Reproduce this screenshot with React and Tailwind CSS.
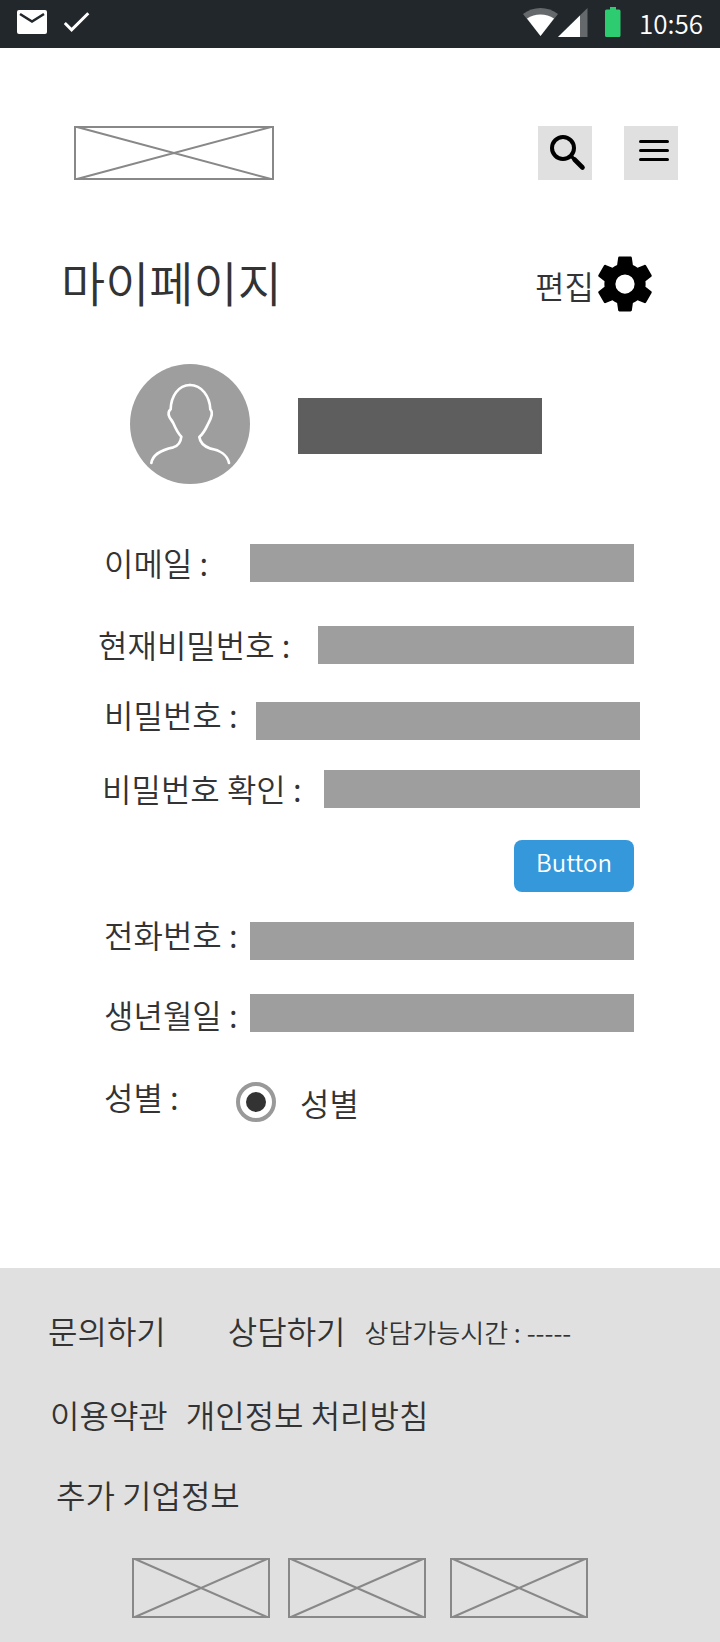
import React from "react";

function ImageBox({ width, height, label }) {
  return (
    <svg width={width} height={height} viewBox={`0 0 ${width} ${height}`} role="img" aria-label={label} fill="none" stroke="#888" strokeWidth="2" className="shrink-0">
      <rect x="1" y="1" width={width - 2} height={height - 2} />
      <path d={`M3 1L${width - 3} ${height - 1}M${width - 3} 1L3 ${height - 1}`} />
    </svg>
  );
}

function StatusBar() {
  return (
    <div className="flex h-12 items-center justify-between bg-[#22272b] px-4 text-white">
      <div className="flex items-center gap-4">
        <svg width="32" height="28" viewBox="0 0 32 28" aria-hidden="true">
          <rect x="1" y="0" width="30" height="24" rx="2" fill="#fff" />
          <path d="M4 4L16 11.500L28 4" fill="none" stroke="#22272b" strokeWidth="2.600" />
        </svg>
        <svg width="26" height="24" viewBox="0 0 26 24" fill="none" stroke="#fff" strokeWidth="3" aria-hidden="true">
          <path d="M0.800 11L7.600 17.800L24.300 1.200" />
        </svg>
      </div>
      <div className="flex items-center pr-px pb-0.5">
        <svg width="100" height="32" viewBox="0 0 100 32" aria-hidden="true">
          <path d="M2 7C12 -1 27 -1 37 7L19.500 29Z" fill="#65696b" />
          <path d="M6 11.600C14 6 25 6 33 11.600L19.500 29Z" fill="#fff" />
          <path d="M66.500 1V30H37Z" fill="#65696b" />
          <path d="M59 8.400V30H37Z" fill="#fff" />
          <path d="M89 0h6v2.500h3a1.500 1.500 0 0 1 1.500 1.500v24.500a1.500 1.500 0 0 1-1.500 1.500H85.500a1.500 1.500 0 0 1-1.500-1.500v-24.500A1.500 1.500 0 0 1 85.500 2.500H89z" fill="#2ecc71" />
        </svg>
        <span className="ml-[18px] text-[26px] leading-8">10:56</span>
      </div>
    </div>
  );
}

function Field({ id, label, type = "text", row, labelWidth, labelLeading = "leading-9" }) {
  return (
    <div className={`flex items-start ${row}`}>
      <label htmlFor={id} className={`shrink-0 whitespace-nowrap ${labelWidth} ${labelLeading}`}>{label}</label>
      <input id={id} type={type} className="h-[38px] min-w-0 flex-1 bg-[#9e9e9e] px-3 text-2xl text-white outline-none" />
    </div>
  );
}

export default function App() {
  return (
    <div className="flex min-h-screen flex-col bg-white font-['Noto_Sans_CJK_KR',sans-serif] text-[32px] font-[350] text-[#333]">
      <StatusBar />

      <header className="mt-[78px] flex items-center pr-[42px] pl-[74px]">
        <a href="#home"><ImageBox width={200} height={54} label="로고" /></a>
        <button type="button" aria-label="검색" className="ml-auto size-[54px] bg-[#e0e0e0]">
          <svg width="54" height="54" viewBox="0 0 54 54" fill="none" stroke="#000" aria-hidden="true">
            <circle cx="25" cy="22" r="11" strokeWidth="4" />
            <path d="M36.500 33.500L44.500 41.500" strokeWidth="4.600" strokeLinecap="round" />
            <path d="M32.500 29.500L37 34" strokeWidth="3.400" />
          </svg>
        </button>
        <button type="button" aria-label="메뉴" className="ml-8 size-[54px] bg-[#e0e0e0]">
          <svg width="54" height="54" viewBox="0 0 54 54" stroke="#000" strokeWidth="3" strokeLinecap="round" aria-hidden="true">
            <path d="M16.500 15.500H43.500M16.500 24.500H43.500M16.500 33.500H43.500" />
          </svg>
        </button>
      </header>

      <main className="mb-[146px]">
        <div className="mt-[70px] flex items-center justify-between pr-[66px] pl-[61px]">
          <h1 className="pb-2 text-5xl leading-[60px]">마이페이지</h1>
          <button type="button" className="flex h-[70px] items-center">
            <span>편집</span>
            <svg width="66" height="66" viewBox="0 0 24 24" fill="#000" className="-mr-1 -ml-0.5 mb-0.5 shrink-0" aria-hidden="true">
              <path d="M19.43 12.98c.04-.32.07-.64.07-.98s-.03-.66-.07-.98l2.11-1.65c.19-.15.24-.42.12-.64l-2-3.46c-.12-.22-.39-.3-.61-.22l-2.49 1c-.52-.4-1.08-.73-1.69-.98l-.38-2.65C14.46 2.18 14.25 2 14 2h-4c-.25 0-.46.18-.49.42l-.38 2.65c-.61.25-1.17.59-1.69.98l-2.49-1c-.23-.09-.49 0-.61.22l-2 3.46c-.13.22-.07.49.12.64l2.11 1.65c-.04.32-.07.65-.07.98s.03.66.07.98l-2.11 1.65c-.19.15-.24.42-.12.64l2 3.46c.12.22.39.3.61.22l2.49-1c.52.4 1.08.73 1.69.98l.38 2.65c.03.24.24.42.49.42h4c.25 0 .46-.18.49-.42l.38-2.65c.61-.25 1.17-.59 1.69-.98l2.49 1c.23.09.49 0 .61-.22l2-3.46c.12-.22.07-.49-.12-.64l-2.11-1.65zM12 15.500a3.500 3.500 0 1 1 0-7 3.500 3.500 0 0 1 0 7z" />
            </svg>
          </button>
        </div>

        <div className="mt-11 flex items-center pr-[178px] pl-[130px]">
          <svg width="120" height="120" viewBox="0 0 360 360" role="img" aria-label="프로필 사진" className="shrink-0">
            <circle cx="180" cy="180" r="180" fill="#9e9e9e" />
            <g fill="none" stroke="#fff" strokeWidth="8" strokeLinecap="round" strokeLinejoin="round">
              <path d="M180 63C145 63 123 97 122 136C116 141 114 149 118 158C121 165 126 169 130 178C136 192 144 209 154 218C152 236 144 246 130 250C96 257 68 272 64 297" />
              <path d="M180 63C215 63 239 97 241 136C246 141 247 149 243 160C241 168 237 174 232 184C226 197 218 210 208 219C210 236 224 248 242 254C268 258 292 272 297 297" />
            </g>
          </svg>
          <div className="mt-1 ml-12 h-14 flex-1 bg-[#5e5e5e]" />
        </div>

        <form className="mt-[60px]" onSubmit={(e) => e.preventDefault()}>
          <Field id="email" type="email" label="이메일 :" row="pl-[104px] pr-[86px]" labelWidth="w-[146px]" />
          <Field id="current-password" type="password" label="현재비밀번호 :" row="mt-11 pl-[98px] pr-[86px]" labelWidth="w-[220px]" />
          <Field id="password" type="password" label="비밀번호 :" row="mt-[38px] pl-[104px] pr-20" labelWidth="w-[152px]" labelLeading="leading-6" />
          <Field id="password-confirm" type="password" label="비밀번호 확인 :" row="mt-[30px] pl-[102px] pr-20" labelWidth="w-[222px]" />
          <div className="mt-8 flex justify-end pr-[86px]">
            <button type="submit" className="h-[52px] w-[120px] rounded-lg bg-[#3498db] pb-2 text-2xl leading-8 text-white">Button</button>
          </div>
          <Field id="phone" type="tel" label="전화번호 :" row="mt-[30px] pl-[104px] pr-[86px]" labelWidth="w-[146px]" labelLeading="leading-6" />
          <Field id="birthday" label="생년월일 :" row="mt-[34px] pl-[104px] pr-[86px]" labelWidth="w-[146px]" labelLeading="leading-10" />
          <div role="radiogroup" aria-labelledby="gender-label" className="mt-12 flex items-start pl-[104px]">
            <span id="gender-label" className="w-[132px] leading-7">성별 :</span>
            <label htmlFor="gender" className="flex items-center gap-6 leading-10">
              <input id="gender" name="gender" type="radio" defaultChecked className="grid size-10 appearance-none place-content-center rounded-full border-4 border-[#999] bg-white before:size-5 before:rounded-full before:content-[''] checked:before:bg-[#333]" />
              성별
            </label>
          </div>
        </form>
      </main>

      <footer className="flex-1 bg-[#e0e0e0] pt-10 pb-6">
        <div className="flex items-center pl-12 leading-[44px] whitespace-nowrap">
          <a href="#inquiry">문의하기</a>
          <a href="#consult" className="ml-[62px]">상담하기</a>
          <span className="ml-[19px] pt-1 text-[26px] leading-10">상담가능시간 : -----</span>
        </div>
        <div className="mt-10 flex gap-[18px] pl-[50px] leading-[44px] whitespace-nowrap">
          <a href="#terms">이용약관</a>
          <a href="#privacy">개인정보 처리방침</a>
        </div>
        <div className="mt-9 pl-14 leading-[44px]">
          <a href="#company">추가 기업정보</a>
        </div>
        <div className="mt-[42px] flex pl-[132px]">
          <ImageBox width={138} height={60} label="이미지 1" />
          <div className="ml-[18px]"><ImageBox width={138} height={60} label="이미지 2" /></div>
          <div className="ml-6"><ImageBox width={138} height={60} label="이미지 3" /></div>
        </div>
      </footer>
    </div>
  );
}
